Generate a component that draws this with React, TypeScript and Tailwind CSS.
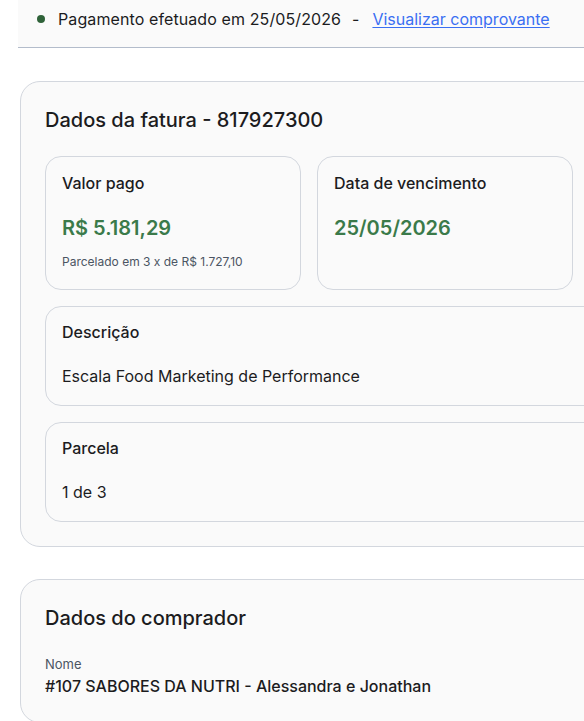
import type { ReactNode } from 'react'

function Box({ className = '', children }: { className?: string; children: ReactNode }) {
  return (
    <div className={`rounded-2xl border border-[#d3d7de] bg-[#fafafa] px-4 ${className}`}>
      {children}
    </div>
  )
}

export default function App() {
  return (
    <div className="min-h-[721px] w-[584px] overflow-hidden bg-white font-['Inter',sans-serif] text-[#1c1c1e]">
      <div className="w-[900px] pl-[18px]">
        <div className="flex h-[48px] items-center border-b border-[#b3bccb] bg-[#fafafa] pb-[9px] pl-[19px]">
          <span className="h-2 w-2 rounded-full bg-[#2f6239]" />
          <span className="ml-[13px] text-base tracking-[0.1px]">Pagamento efetuado em 25/05/2026</span>
          <span className="ml-[11px] text-base">-</span>
          <a href="#" className="ml-[13px] text-base text-[#3a6ff2] underline underline-offset-2">
            Visualizar comprovante
          </a>
        </div>
      </div>

      <div className="flex w-[900px] flex-col gap-[32px] pl-[20px] pt-[33px]">
        <section className="rounded-[20px] border border-[#d3d7de] bg-[#fafafa] px-6 pt-6 pb-6">
          <h2 className="text-xl font-medium leading-7">Dados da fatura - 817927300</h2>

          <div className="mt-[22px] flex gap-4">
            <Box className="w-[256px] pt-[14px] pb-[19px]">
              <p className="text-base font-medium leading-6">Valor pago</p>
              <p className="mt-[19px] text-xl font-semibold leading-7 text-[#3b7a4a]">R$ 5.181,29</p>
              <p className="mt-3 text-xs leading-4 text-[#4b5563]">Parcelado em 3 x de R$ 1.727,10</p>
            </Box>
            <Box className="w-[256px] pt-[14px] pb-[19px]">
              <p className="text-base font-medium leading-6">Data de vencimento</p>
              <p className="mt-[19px] text-xl font-semibold leading-7 text-[#3b7a4a]">25/05/2026</p>
            </Box>
          </div>

          <div className="mt-4 flex flex-col gap-4">
            <Box className="pt-[13px] pb-[17px]">
              <p className="text-base font-medium leading-6">Descrição</p>
              <p className="mt-5 text-base leading-6">Escala Food Marketing de Performance</p>
            </Box>
            <Box className="pt-[13px] pb-[17px]">
              <p className="text-base font-medium leading-6">Parcela</p>
              <p className="mt-5 text-base leading-6">1 de 3</p>
            </Box>
          </div>
        </section>

        <section className="rounded-[20px] border border-[#d3d7de] bg-[#fafafa] px-6 pt-6 pb-6">
          <h2 className="text-xl font-medium leading-7">Dados do comprador</h2>
          <div className="mt-[22px]">
            <p className="text-[13px] leading-5 text-[#4b5563]">Nome</p>
            <p className="text-base font-medium leading-6">#107 SABORES DA NUTRI - Alessandra e Jonathan</p>
          </div>
        </section>
      </div>
    </div>
  )
}
